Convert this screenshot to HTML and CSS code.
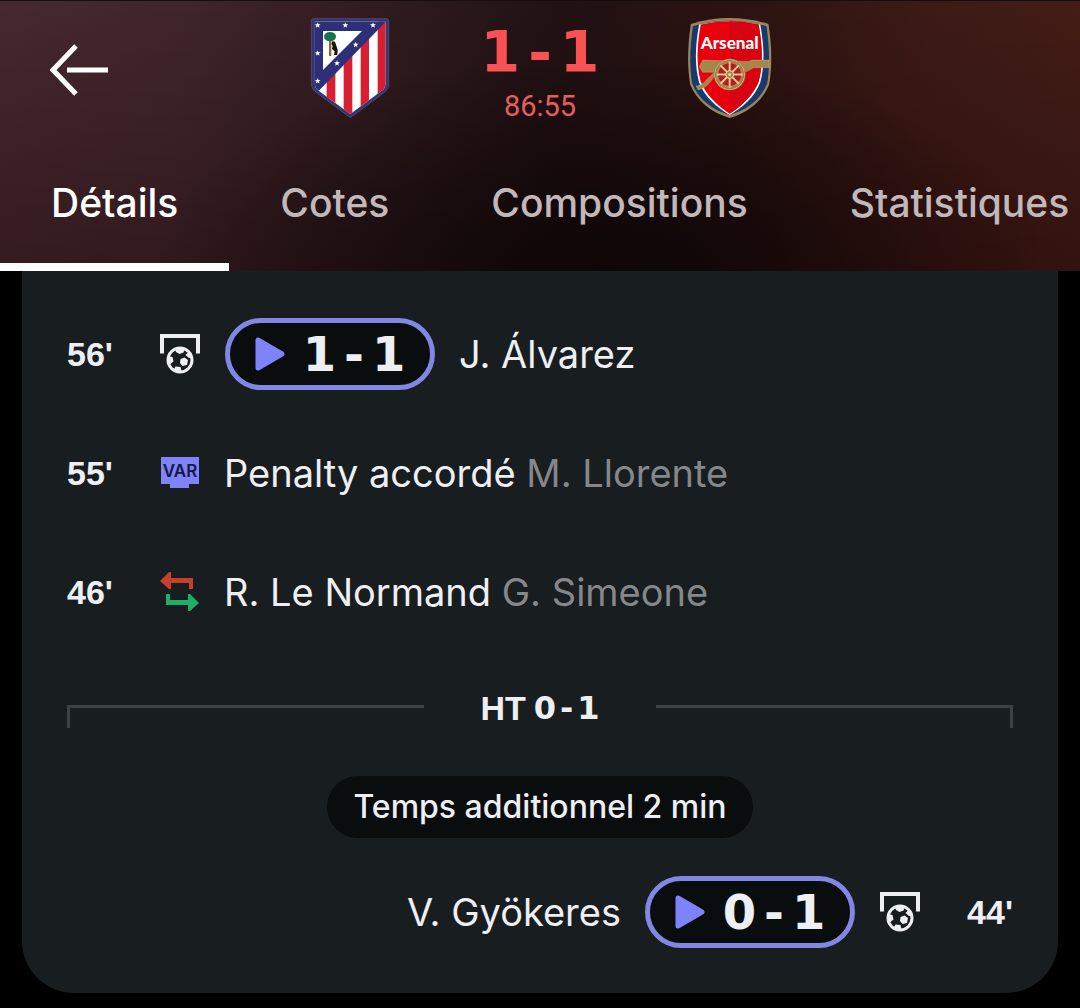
FILE: index.html
```html
<!DOCTYPE html>
<html lang="fr">
<head>
<meta charset="utf-8">
<meta name="viewport" content="width=device-width, initial-scale=1">
<title>Atlético - Arsenal</title>
<link rel="stylesheet" href="styles.css">
</head>
<body>
<svg class="defs" aria-hidden="true">
  <symbol id="goal" viewBox="0 0 40 40">
    <path d="M2 19.500V2h36v17.500" fill="none" stroke="currentColor" stroke-width="4"/>
    <circle cx="20" cy="26" r="12" fill="none" stroke="currentColor" stroke-width="3"/>
    <path d="M15 14.500h10l-1.500 4-4 1.500-3.500-2zM8 22l4.500 1 1 4.500-3 2.500-2.500-1zM20.500 25l4-1.500 3.500 2.500-1 5-4.500 1-2.500-3zM30 19.500l-2.500-.500-2 2 3.500 3 3-.500zM13.500 36l2-3.500 5 .500 1 4.500z" fill="currentColor"/>
  </symbol>
  <symbol id="star" viewBox="-10 -10 20 20">
    <path d="M0-9l2.300 6h6.500l-5.200 4 2 6.500L0 3.800l-5.600 3.700 2-6.500-5.200-4h6.500z" fill="#fff"/>
  </symbol>
  <symbol id="play" viewBox="0 0 30 34">
    <path d="M3 3v28L27 17z" fill="currentColor" stroke="currentColor" stroke-width="5" stroke-linejoin="round"/>
  </symbol>
</svg>

<header class="match-header">
  <div class="match-bar">
    <button class="back" type="button" aria-label="Retour">
      <svg width="58" height="52" viewBox="0 0 58 52"><path d="M26 2L3 26l23 24M17 26h41" fill="none" stroke="#fff" stroke-width="5"/></svg>
    </button>
    <div class="scoreboard">
      <svg class="crest" viewBox="23 24 258 300" role="img" aria-label="Atlético de Madrid">
        <defs><clipPath id="atm"><path d="M46 34h213v184c0 11-4 18-12 24l-94 70-95-70c-8-6-12-13-12-24z"/></clipPath></defs>
        <path d="M42 26h221q5 0 5 6v188c0 13-4 20-14 28l-101 75-101-75c-11-8-16-15-16-28V32q0-6 6-6z" fill="#34366f" stroke="#605386" stroke-width="2"/>
        <g clip-path="url(#atm)">
          <path d="M36 26h232v300H36z" fill="#fff"/>
          <path d="M82 100h26v226H82zM133 100h26v226h-26zM184 60h25v266h-25zM235 26h33v300h-33z" fill="#d81e32"/>
          <path d="M36 26h232L57 244H36z" fill="#2d3079"/>
        </g>
        <path d="M71 63h117L71 180z" fill="#fff"/>
        <path d="M89 88h7v50h-7z" fill="#8a6841"/>
        <ellipse cx="92" cy="80" rx="18" ry="14" fill="#16734a"/>
        <path d="M99 94l8 1 4 12 4 12-1 16h-10l2-11-8-7 2-10-4-4z" fill="#15120f"/>
        <use href="#star" x="45" y="36" width="20" height="20"/><use href="#star" x="128" y="36" width="20" height="20"/><use href="#star" x="211" y="36" width="20" height="20"/>
        <use href="#star" x="45" y="120" width="20" height="20"/><use href="#star" x="45" y="203" width="20" height="20"/>
        <use href="#star" x="159" y="94" width="20" height="20"/><use href="#star" x="103" y="150" width="20" height="20"/>
      </svg>
      <div class="result">
        <div class="digits digits-live"><span>1</span><span>-</span><span>1</span></div>
        <div class="clock">86:55</div>
      </div>
      <svg class="crest" viewBox="34 22 256 304" role="img" aria-label="Arsenal">
        <path d="M43 40q118-36 236 0c11 72 11 132 2 184-20 50-62 84-120 102-58-18-100-52-120-102-9-52-9-112 2-184z" fill="#9b8458"/>
        <path d="M49 47q112-33 224 0c10 70 10 126 2 174-19 48-58 79-114 96-56-17-95-48-114-96-8-48-8-104 2-174z" fill="#153b6c"/>
        <path d="M68 42q93-20 186 0c12 66 14 124 0 176-17 44-54 76-93 99-39-23-76-55-93-99-14-52-12-110 0-176z" fill="#fff"/>
        <path d="M73 42q88-20 176 0c12 66 14 122 0 174-17 42-53 74-88 97-35-23-71-55-88-97-14-52-12-108 0-174z" fill="#e8000d"/>
        <path d="M161 32q45 0 88 10c12 66 14 122 0 174-17 42-53 74-88 97z" fill="#d70310"/>
        <path d="M69 170l10-20 140 4 10-4h52v23h-48l-20 12h-70q-24 0-36 25-15 24-42 31l-6-12q22-4 30-18l26-24H79z" fill="#a5864d" stroke="#d9c48c" stroke-width="1"/>
        <circle cx="161" cy="194" r="48" fill="#a5864d"/>
        <circle cx="161" cy="194" r="45" fill="#b2131a" stroke="#d8c48a" stroke-width="3"/>
        <circle cx="161" cy="194" r="39" fill="#b71b1d" stroke="#a5864d" stroke-width="9"/>
        <path d="M161 154v80M121 194h80M133 166l56 56M189 166l-56 56" stroke="#e1cc91" stroke-width="6"/>
        <circle cx="161" cy="194" r="12" fill="#a5864d" stroke="#efdda7" stroke-width="3"/>
        <circle cx="161" cy="194" r="4" fill="#f3e4b8"/>
        <text class="crest-name" x="161" y="117" text-anchor="middle">Arsenal</text>
      </svg>
    </div>
  </div>
  <nav class="tabs">
    <a class="tab tab-active" href="#details" aria-current="page">Détails</a>
    <a class="tab" href="#cotes">Cotes</a>
    <a class="tab" href="#compositions">Compositions</a>
    <a class="tab" href="#statistiques">Statistiques</a>
  </nav>
</header>

<main class="timeline" id="details">
  <div class="event">
    <span class="minute">56'</span>
    <svg class="icon" role="img" aria-label="But"><use href="#goal"/></svg>
    <button class="replay" type="button"><svg class="play"><use href="#play"/></svg><span class="digits"><span>1</span><span>-</span><span>1</span></span></button>
    <span class="label">J. Álvarez</span>
  </div>
  <div class="event">
    <span class="minute">55'</span>
    <svg class="icon" viewBox="0 0 40 40"><path d="M1 4h38v27H29v4H10v-4H1z" fill="#7f83fa"/><text class="var" x="20" y="24" text-anchor="middle">VAR</text></svg>
    <span class="label">Penalty accordé <span class="secondary">M. Llorente</span></span>
  </div>
  <div class="event">
    <span class="minute">46'</span>
    <svg class="icon" viewBox="0 0 40 40" role="img" aria-label="Remplacement">
      <path d="M0 9l9-9h2v6h22v11h-4v-6H11v6H9z" fill="#c5402b"/>
      <path d="M39 31l-9-9h-2v6H10v-6H6v11h22v6h2z" fill="#20ad6a"/>
    </svg>
    <span class="label">R. Le Normand <span class="secondary">G. Simeone</span></span>
  </div>
  <div class="half-time">
    <span class="bracket bracket-left"></span>
    <h2 class="half-score">HT <span class="digits digits-small"><span>0</span><span>-</span><span>1</span></span></h2>
    <span class="bracket bracket-right"></span>
  </div>
  <p class="chip">Temps additionnel 2 min</p>
  <div class="event event-away">
    <span class="minute">44'</span>
    <svg class="icon" role="img" aria-label="But"><use href="#goal"/></svg>
    <button class="replay" type="button"><svg class="play"><use href="#play"/></svg><span class="digits"><span>0</span><span>-</span><span>1</span></span></button>
    <span class="label">V. Gyökeres</span>
  </div>
</main>
</body>
</html>
```
FILE: styles.css
```css
* {
  box-sizing: border-box;
}

body {
  margin: 0;
  background: #000;
  color: #edeff3;
  font-family: Inter, "Liberation Sans", sans-serif;
}

button {
  margin: 0;
  padding: 0;
  border: 0;
  background: none;
  color: inherit;
  font: inherit;
  cursor: pointer;
}

svg {
  display: block;
  flex: none;
}

.defs {
  position: absolute;
  width: 0;
  height: 0;
}

.match-header {
  padding-top: 17px;
  background:
    radial-gradient(ellipse 42% 80% at 56% 100%, rgba(8, 4, 5, 0.75), rgba(8, 4, 5, 0)),
    linear-gradient(rgba(0, 0, 0, 0), rgba(20, 0, 4, 0.35)),
    linear-gradient(90deg, #45292f 0%, #40262b 16%, #2d1a1d 38%, #211113 52%, #2a1311 68%, #3d1a15 86%, #431d16 100%);
  border-top: 1px solid #160d0f;
}

.match-bar {
  display: grid;
  grid-template-columns: 1fr auto 1fr;
  height: 100px;
}

.back {
  justify-self: start;
  align-self: center;
  padding-left: 50px;
}

.scoreboard {
  display: flex;
  justify-content: space-between;
  width: 466px;
}

.crest {
  width: 86px;
  height: 100px;
}

.crest-name {
  font: 900 52px Lato, "Open Sans", sans-serif;
  fill: #fff;
}

.result {
  display: flex;
  flex-direction: column;
  align-items: center;
  color: #fa5154;
}

.clock {
  margin-top: 4px;
  color: #e55e60;
  font-family: Roboto, sans-serif;
  font-size: 29px;
  line-height: 32px;
}

.digits {
  display: flex;
  gap: 8px;
  font-family: "DejaVu Sans", sans-serif;
  font-weight: bold;
  font-size: 48px;
  line-height: 62px;
}

.digits-live {
  font-size: 57px;
  line-height: 68px;
}

.digits-small {
  gap: 4px;
  font-size: 32px;
  line-height: 40px;
}

.tabs {
  display: flex;
  overflow: hidden;
}

.tab {
  flex: none;
  padding: 61px 51px 36px;
  border-bottom: 8px solid transparent;
  color: #c2b8b9;
  font-size: 39px;
  font-weight: 500;
  line-height: 48px;
  text-decoration: none;
}

.tab-active {
  border-color: #fff;
  color: #fff;
}

.timeline {
  display: flex;
  flex-direction: column;
  margin: 0 22px 15px;
  padding: 47px 45px 45px;
  border-radius: 0 0 52px 52px;
  background: #181d1f;
}

.event {
  display: flex;
  align-items: center;
  min-height: 72px;
  margin-bottom: 47px;
}

.event-away {
  flex-direction: row-reverse;
  margin-bottom: 0;
}

.minute {
  width: 93px;
  font-family: "Liberation Sans", sans-serif;
  font-size: 34px;
  font-weight: 700;
}

.event-away .minute {
  text-align: right;
}

.icon {
  width: 40px;
  height: 40px;
}

.var {
  font: 600 17px Inter, sans-serif;
  fill: #15193f;
}

.replay {
  display: flex;
  align-items: center;
  justify-content: center;
  gap: 18px;
  width: 210px;
  height: 72px;
  margin-left: 25px;
  border: 5px solid #8287e4;
  border-radius: 36px;
  background: #0a0d0e;
}

.event-away .replay {
  margin: 0 25px 0 0;
}

.play {
  width: 30px;
  height: 34px;
  color: #7f83fa;
}

.label {
  margin: 0 24px;
  font-size: 38px;
  line-height: 48px;
}

.secondary {
  color: #85888a;
}

.half-time {
  display: grid;
  grid-template-columns: 1fr auto 1fr;
  align-items: center;
  gap: 56px;
  margin: 13px 0 48px;
}

.half-score {
  display: flex;
  gap: 8px;
  margin: 0;
  font-family: "Liberation Sans", sans-serif;
  font-size: 34px;
  font-weight: 700;
  line-height: 40px;
}

.bracket {
  align-self: end;
  height: 23px;
  border: 0 solid #3d4143;
  border-top-width: 3px;
}

.bracket-left {
  border-left-width: 3px;
}

.bracket-right {
  border-right-width: 3px;
}

.chip {
  align-self: center;
  margin: 0 0 38px;
  padding: 11px 26px;
  border-radius: 31px;
  background: #0a0d0e;
  font-size: 32px;
  font-weight: 500;
  line-height: 40px;
}
```
